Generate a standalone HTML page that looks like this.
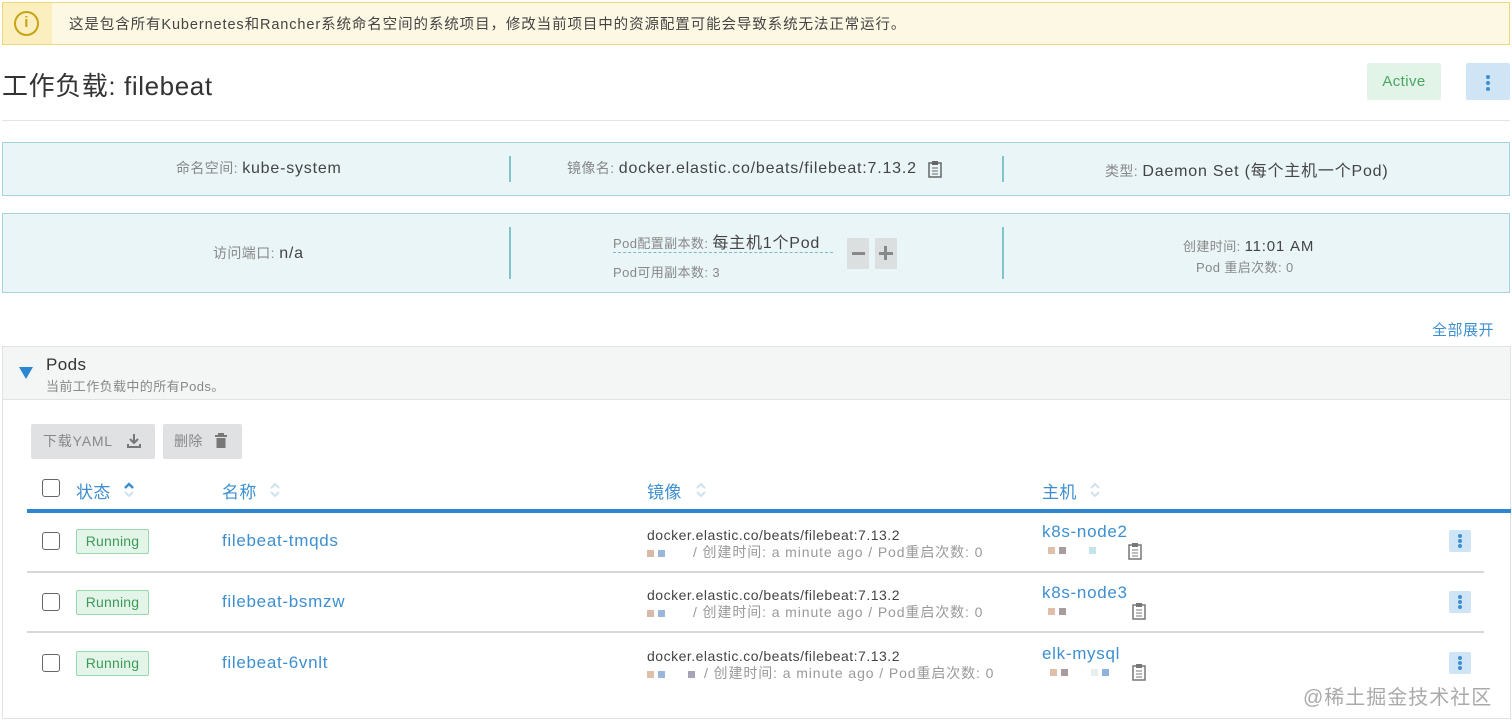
<!DOCTYPE html>
<html><head><meta charset="utf-8">
<style>
*{box-sizing:border-box;margin:0;padding:0}
body{width:1512px;height:723px;overflow:hidden;background:#fff;position:relative;font-family:"Liberation Sans","Noto Sans CJK SC",sans-serif;color:#444;letter-spacing:0.4px}
.a{position:absolute;white-space:nowrap}
.lbl{color:#888;font-size:14px}
.val{color:#444;font-size:16px;letter-spacing:0.8px}
.blue{color:#3d8fd1}
.box{position:absolute;left:2px;width:1508px;background:#e9f5f7;border:1px solid #a6d3df}
.div{position:absolute;width:2px;background:#7fc4cc}
.cb{position:absolute;width:18px;height:18px;border:1.5px solid #666;border-radius:3px;background:#fff}
.run{position:absolute;left:76px;width:73px;height:25px;border:1px solid #9ad7ae;background:#e3f5e8;color:#3d9a59;font-size:14px;border-radius:2px;text-align:center;line-height:23px;letter-spacing:0.2px}
.dots{position:absolute;left:1449px;width:22px;height:22px;background:#cfe4f4;border-radius:2px}
.dots i{position:absolute;left:9px;width:4px;height:4px;border-radius:2px;background:#3d8fd1}
.sep{position:absolute;left:27px;width:1457px;height:2px;background:#d8d8d8}
.ph{display:inline-block;width:7px;height:7px;margin-right:4px;vertical-align:middle}
.sort{position:absolute;width:10px;height:16px}
.img1{font-size:14px;color:#444;letter-spacing:0.5px}
.img2{font-size:14px;color:#999;letter-spacing:0.9px}
.nm{font-size:17px;letter-spacing:0.7px}
</style></head><body>
<div class="a" style="left:2px;top:2px;width:1508px;height:43px;background:#fdf8e3;border:1px solid #f0d77a"></div>
<div class="a" style="left:3px;top:3px;width:49px;height:41px;background:#fbefc0"></div>
<div class="a" style="left:14px;top:11px;width:25px;height:25px;border:2.5px solid #c9a315;border-radius:50%;color:#c9a315;font-size:15px;font-weight:bold;text-align:center;line-height:20px">i</div>
<div class="a" style="left:69px;top:13px;font-size:14.5px;color:#444;letter-spacing:0.9px">这是包含所有Kubernetes和Rancher系统命名空间的系统项目，修改当前项目中的资源配置可能会导致系统无法正常运行。</div>
<div class="a" style="left:2px;top:66px;font-size:26px;color:#333;letter-spacing:0.6px">工作负载: filebeat</div>
<div class="a" style="left:1367px;top:63px;width:74px;height:37px;background:#e2f3e7;border-radius:2px;color:#4aa564;font-size:15px;text-align:center;line-height:37px">Active</div>
<div class="a" style="left:1466px;top:63px;width:44px;height:37px;background:#cfe4f4;border-radius:2px"></div>
<div class="a" style="left:1486px;top:75px;width:4px;height:4px;border-radius:2px;background:#3d8fd1"></div>
<div class="a" style="left:1486px;top:81px;width:4px;height:4px;border-radius:2px;background:#3d8fd1"></div>
<div class="a" style="left:1486px;top:87px;width:4px;height:4px;border-radius:2px;background:#3d8fd1"></div>
<div class="a" style="left:2px;top:120px;width:1508px;height:1px;background:#e4e4e4"></div>
<div class="box" style="top:142px;height:54px"></div>
<div class="div" style="left:509px;top:156px;height:26px"></div>
<div class="div" style="left:1002px;top:156px;height:26px"></div>
<div class="a" style="left:176px;top:158px"><span class="lbl">命名空间: </span><span class="val">kube-system</span></div>
<div class="a" style="left:567px;top:158px"><span class="lbl">镜像名: </span><span class="val">docker.elastic.co/beats/filebeat:7.13.2</span></div>
<svg class="a" style="left:927px;top:160px" width="16" height="18" viewBox="0 0 16 18"><rect x="2" y="3" width="12" height="14" fill="none" stroke="#666" stroke-width="1.5"/><rect x="5" y="1" width="6" height="4" fill="#666"/><path d="M5 8h6M5 11h6M5 14h6" stroke="#666"/></svg>
<div class="a" style="left:1105px;top:157px"><span class="lbl">类型: </span><span class="val">Daemon Set (每个主机一个Pod)</span></div>
<div class="box" style="top:213px;height:80px"></div>
<div class="div" style="left:509px;top:227px;height:52px"></div>
<div class="div" style="left:1002px;top:227px;height:52px"></div>
<div class="a" style="left:213px;top:243px"><span class="lbl">访问端口: </span><span class="val">n/a</span></div>
<div class="a" style="left:613px;top:229px"><span class="lbl" style="font-size:13px">Pod配置副本数: </span><span class="val">每主机1个Pod</span></div>
<div class="a" style="left:613px;top:252px;width:220px;border-top:1px dashed #7fb9c6"></div>
<div class="a lbl" style="left:613px;top:262px;font-size:13px">Pod可用副本数: 3</div>
<div class="a" style="left:847px;top:238px;width:22px;height:31px;background:#dcdfe0"></div>
<div class="a" style="left:852px;top:252px;width:13px;height:3px;background:#888"></div>
<div class="a" style="left:875px;top:238px;width:22px;height:31px;background:#dcdfe0"></div>
<div class="a" style="left:879px;top:252px;width:14px;height:3px;background:#888"></div>
<div class="a" style="left:884px;top:246px;width:3px;height:14px;background:#888"></div>
<div class="a" style="left:1183px;top:236px"><span class="lbl" style="font-size:13px">创建时间: </span><span class="val" style="font-size:15px">11:01 AM</span></div>
<div class="a lbl" style="left:1196px;top:257px;font-size:13px">Pod 重启次数: 0</div>
<div class="a blue" style="left:1432px;top:319px;font-size:15px;letter-spacing:0.5px">全部展开</div>
<div class="a" style="left:2px;top:346px;width:1509px;height:373px;border:1px solid #e2e2e2"></div>
<div class="a" style="left:3px;top:347px;width:1507px;height:53px;background:#f4f5f5;border-bottom:1px solid #e2e2e2"></div>
<svg class="a" style="left:19px;top:367px" width="14" height="12"><path d="M0 0h14L7 12z" fill="#2d87d0"/></svg>
<div class="a" style="left:46px;top:355px;font-size:17px;color:#333">Pods</div>
<div class="a" style="left:46px;top:376px;font-size:13px;color:#888">当前工作负载中的所有Pods。</div>
<div class="a" style="left:31px;top:424px;width:124px;height:35px;background:#dfe1e2;border-radius:2px;color:#888;font-size:14px;line-height:35px;padding-left:12px;letter-spacing:0.8px">下载YAML</div>
<svg class="a" style="left:126px;top:433px" width="16" height="16"><path d="M8 1v9M4 6l4 4 4-4M2 11v3h12v-3" fill="none" stroke="#777" stroke-width="2"/></svg>
<div class="a" style="left:163px;top:424px;width:79px;height:35px;background:#dfe1e2;border-radius:2px;color:#888;font-size:14px;line-height:35px;padding-left:11px">删除</div>
<svg class="a" style="left:214px;top:433px" width="14" height="16"><path d="M1 3h12M5 3V1h4v2" fill="none" stroke="#777" stroke-width="2"/><rect x="2.5" y="5" width="9" height="10" fill="#777"/></svg>
<div class="cb" style="left:42px;top:479px"></div>
<div class="a blue" style="left:76px;top:478px;font-size:17px">状态</div>
<svg class="sort" style="left:124px;top:482px" viewBox="0 0 10 16"><path d="M1 6l4-4 4 4" fill="none" stroke="#3d8fd1" stroke-width="2.5"/><path d="M1 10l4 4 4-4" fill="none" stroke="#cfe1ef" stroke-width="2"/></svg>
<div class="a blue" style="left:222px;top:478px;font-size:17px">名称</div>
<svg class="sort" style="left:270px;top:482px" viewBox="0 0 10 16"><path d="M1 6l4-4 4 4M1 10l4 4 4-4" fill="none" stroke="#cfe1ef" stroke-width="2"/></svg>
<div class="a blue" style="left:647px;top:478px;font-size:17px">镜像</div>
<svg class="sort" style="left:696px;top:482px" viewBox="0 0 10 16"><path d="M1 6l4-4 4 4M1 10l4 4 4-4" fill="none" stroke="#cfe1ef" stroke-width="2"/></svg>
<div class="a blue" style="left:1042px;top:478px;font-size:17px">主机</div>
<svg class="sort" style="left:1090px;top:482px" viewBox="0 0 10 16"><path d="M1 6l4-4 4 4M1 10l4 4 4-4" fill="none" stroke="#cfe1ef" stroke-width="2"/></svg>
<div class="a" style="left:27px;top:509px;width:1484px;height:4px;background:#2d87d0"></div>

<div class="cb" style="left:42px;top:532px"></div>
<div class="run" style="top:529px">Running</div>
<div class="a blue nm" style="left:222px;top:531px">filebeat-tmqds</div>
<div class="a img1" style="left:647px;top:527px">docker.elastic.co/beats/filebeat:7.13.2</div>
<div class="a img2" style="left:647px;top:542px"><span class="ph" style="background:#d8b9a8"></span><span class="ph" style="background:#9bb6dc"></span>&nbsp;&nbsp;&nbsp;&nbsp; / 创建时间: a minute ago / Pod重启次数: 0</div>
<div class="a blue nm" style="left:1042px;top:522px">k8s-node2</div>
<div class="a" style="left:1048px;top:542px"><span class="ph" style="background:#e0bfa8"></span><span class="ph" style="background:#a89c9c"></span>&nbsp;&nbsp;&nbsp;&nbsp;<span class="ph" style="background:#c3e5ea"></span></div>
<svg class="a" style="left:1127px;top:542px" width="16" height="18" viewBox="0 0 16 18"><rect x="2" y="3" width="12" height="14" fill="none" stroke="#777" stroke-width="1.5"/><rect x="5" y="1" width="6" height="4" fill="#777"/><path d="M5 8h6M5 11h6M5 14h6" stroke="#777"/></svg>
<div class="dots" style="top:530px"><i style="top:4px"></i><i style="top:9px"></i><i style="top:14px"></i></div>
<div class="sep" style="top:571px"></div>

<div class="cb" style="left:42px;top:593px"></div>
<div class="run" style="top:590px">Running</div>
<div class="a blue nm" style="left:222px;top:592px">filebeat-bsmzw</div>
<div class="a img1" style="left:647px;top:587px">docker.elastic.co/beats/filebeat:7.13.2</div>
<div class="a img2" style="left:647px;top:602px"><span class="ph" style="background:#d8b9a8"></span><span class="ph" style="background:#9bb6dc"></span>&nbsp;&nbsp;&nbsp;&nbsp; / 创建时间: a minute ago / Pod重启次数: 0</div>
<div class="a blue nm" style="left:1042px;top:583px">k8s-node3</div>
<div class="a" style="left:1048px;top:603px"><span class="ph" style="background:#e0bfa8"></span><span class="ph" style="background:#a89c9c"></span></div>
<svg class="a" style="left:1131px;top:602px" width="16" height="18" viewBox="0 0 16 18"><rect x="2" y="3" width="12" height="14" fill="none" stroke="#777" stroke-width="1.5"/><rect x="5" y="1" width="6" height="4" fill="#777"/><path d="M5 8h6M5 11h6M5 14h6" stroke="#777"/></svg>
<div class="dots" style="top:591px"><i style="top:4px"></i><i style="top:9px"></i><i style="top:14px"></i></div>
<div class="sep" style="top:631px"></div>

<div class="cb" style="left:42px;top:654px"></div>
<div class="run" style="top:651px">Running</div>
<div class="a blue nm" style="left:222px;top:653px">filebeat-6vnlt</div>
<div class="a img1" style="left:647px;top:648px">docker.elastic.co/beats/filebeat:7.13.2</div>
<div class="a img2" style="left:647px;top:663px"><span class="ph" style="background:#e0bfa8"></span><span class="ph" style="background:#9bb6dc"></span>&nbsp;&nbsp;&nbsp;&nbsp;<span class="ph" style="background:#a8a3b8"></span> / 创建时间: a minute ago / Pod重启次数: 0</div>
<div class="a blue nm" style="left:1042px;top:644px">elk-mysql</div>
<div class="a" style="left:1050px;top:664px"><span class="ph" style="background:#e0bfa8"></span><span class="ph" style="background:#a89c9c"></span>&nbsp;&nbsp;&nbsp;&nbsp;<span class="ph" style="background:#e8eeee"></span><span class="ph" style="background:#8fb3dc"></span></div>
<svg class="a" style="left:1131px;top:663px" width="16" height="18" viewBox="0 0 16 18"><rect x="2" y="3" width="12" height="14" fill="none" stroke="#777" stroke-width="1.5"/><rect x="5" y="1" width="6" height="4" fill="#777"/><path d="M5 8h6M5 11h6M5 14h6" stroke="#777"/></svg>
<div class="dots" style="top:652px"><i style="top:4px"></i><i style="top:9px"></i><i style="top:14px"></i></div>

<div class="a" style="left:1303px;top:681px;font-size:20px;color:#aaa;letter-spacing:1px">@稀土掘金技术社区</div>
</body></html>
